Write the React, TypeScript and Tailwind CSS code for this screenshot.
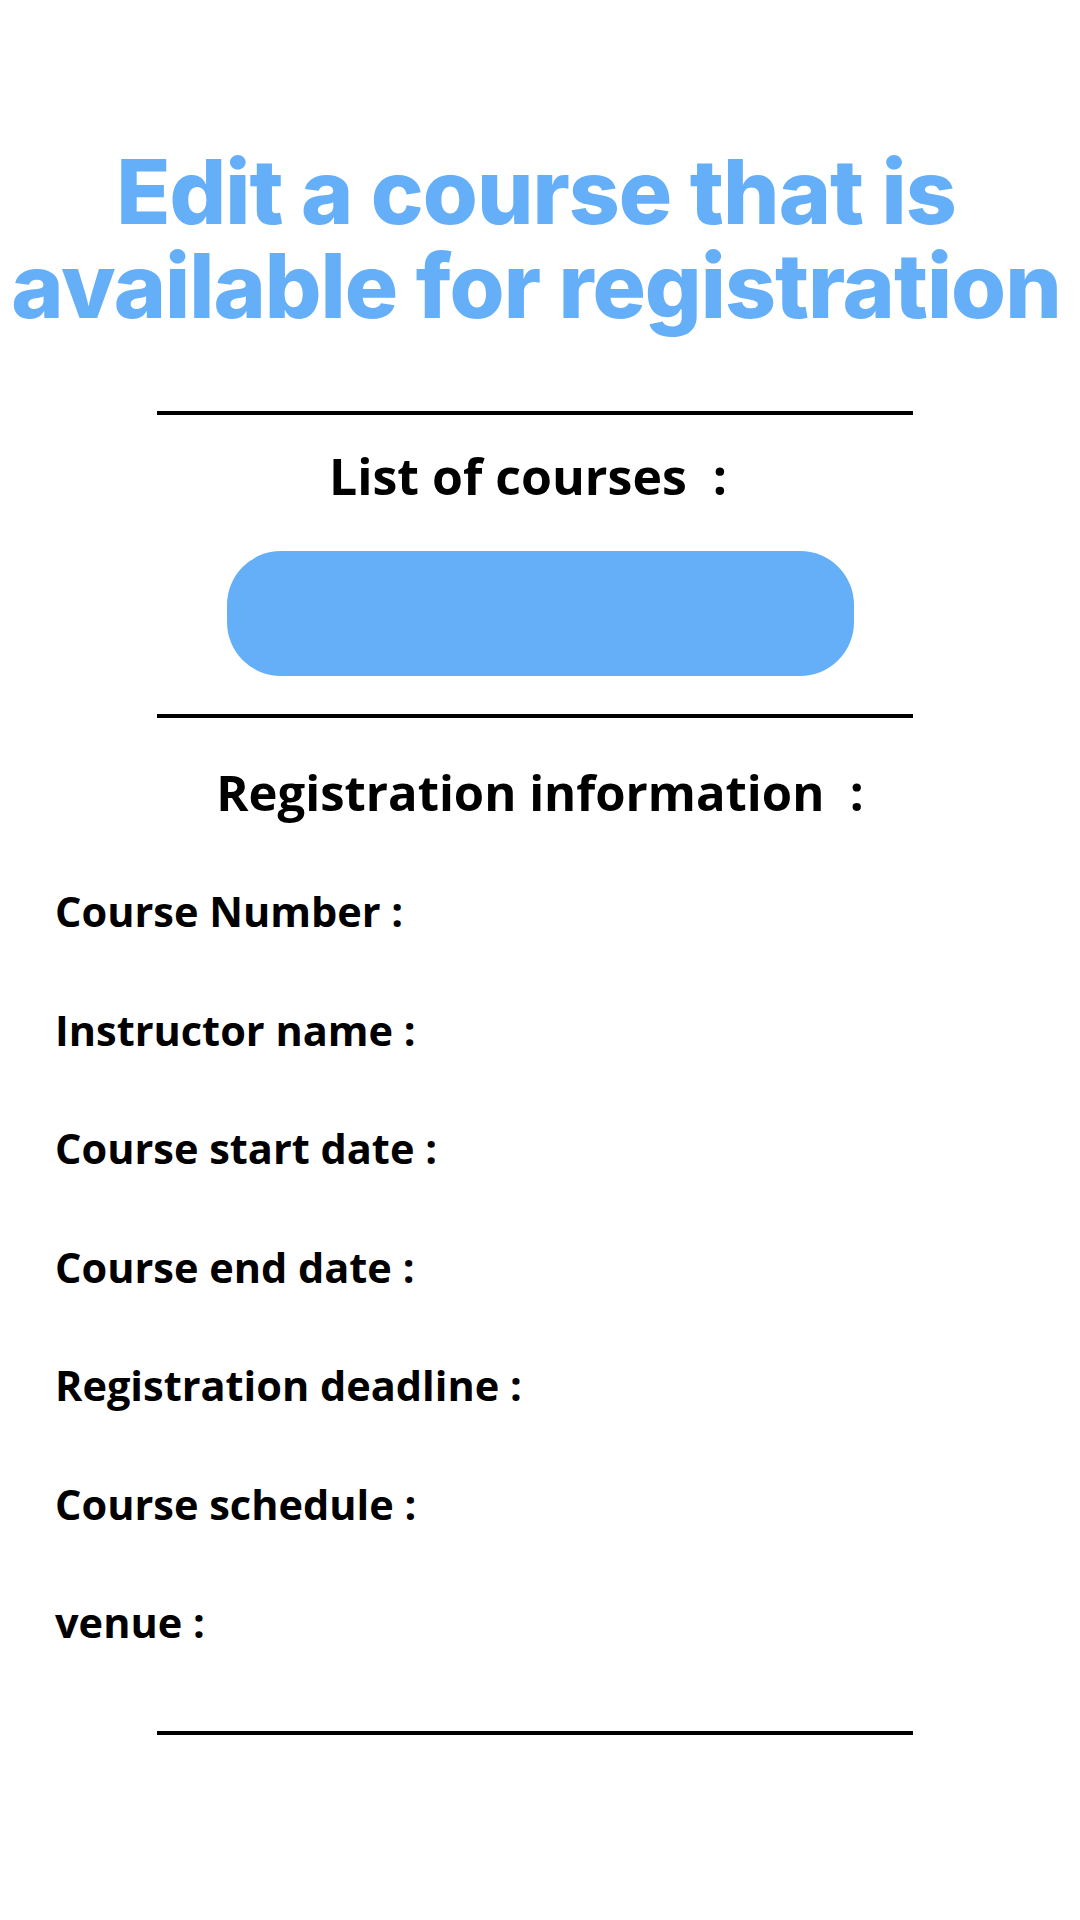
export default function App() {
  const fields = [
    'Course Number :',
    'Instructor name :',
    'Course start date :',
    'Course end date :',
    'Registration deadline :',
    'Course schedule :',
    'venue :',
  ]

  return (
    <div className="min-h-[1920px] w-[1080px] bg-white flex flex-col items-center font-['Open_Sans',sans-serif] text-black">
      <h1 className="pt-[145px] mr-[8px] text-center font-['Inter',sans-serif] font-extrabold text-[89px] leading-[94px] tracking-[-1px] text-[#65aff9] whitespace-nowrap">
        <span className="block">Edit a course that is</span>
        <span className="block">available for registration</span>
      </h1>

      <div className="mt-[78px] mr-[10px] h-[4px] w-[756px] bg-black" />

      <h2 className="mt-[36px] mr-[24px] text-[50px] leading-[50px] font-bold whitespace-pre">List of courses  :</h2>

      <div className="mt-[50px] h-[125px] w-[627px] rounded-[54px] bg-[#65aff9]" />

      <div className="mt-[38px] mr-[10px] h-[4px] w-[756px] bg-black" />

      <h2 className="mt-[50px] text-[49px] leading-[49px] font-bold whitespace-pre">Registration information  :</h2>

      <div className="mt-[74px] self-stretch pl-[55px] flex flex-col gap-[77.5px]">
        {fields.map(f => (
          <p key={f} className="text-[41.5px] leading-[41px] font-bold">{f}</p>
        ))}
      </div>

      <div className="mt-[88px] mr-[10px] h-[4px] w-[756px] bg-black" />
    </div>
  )
}
